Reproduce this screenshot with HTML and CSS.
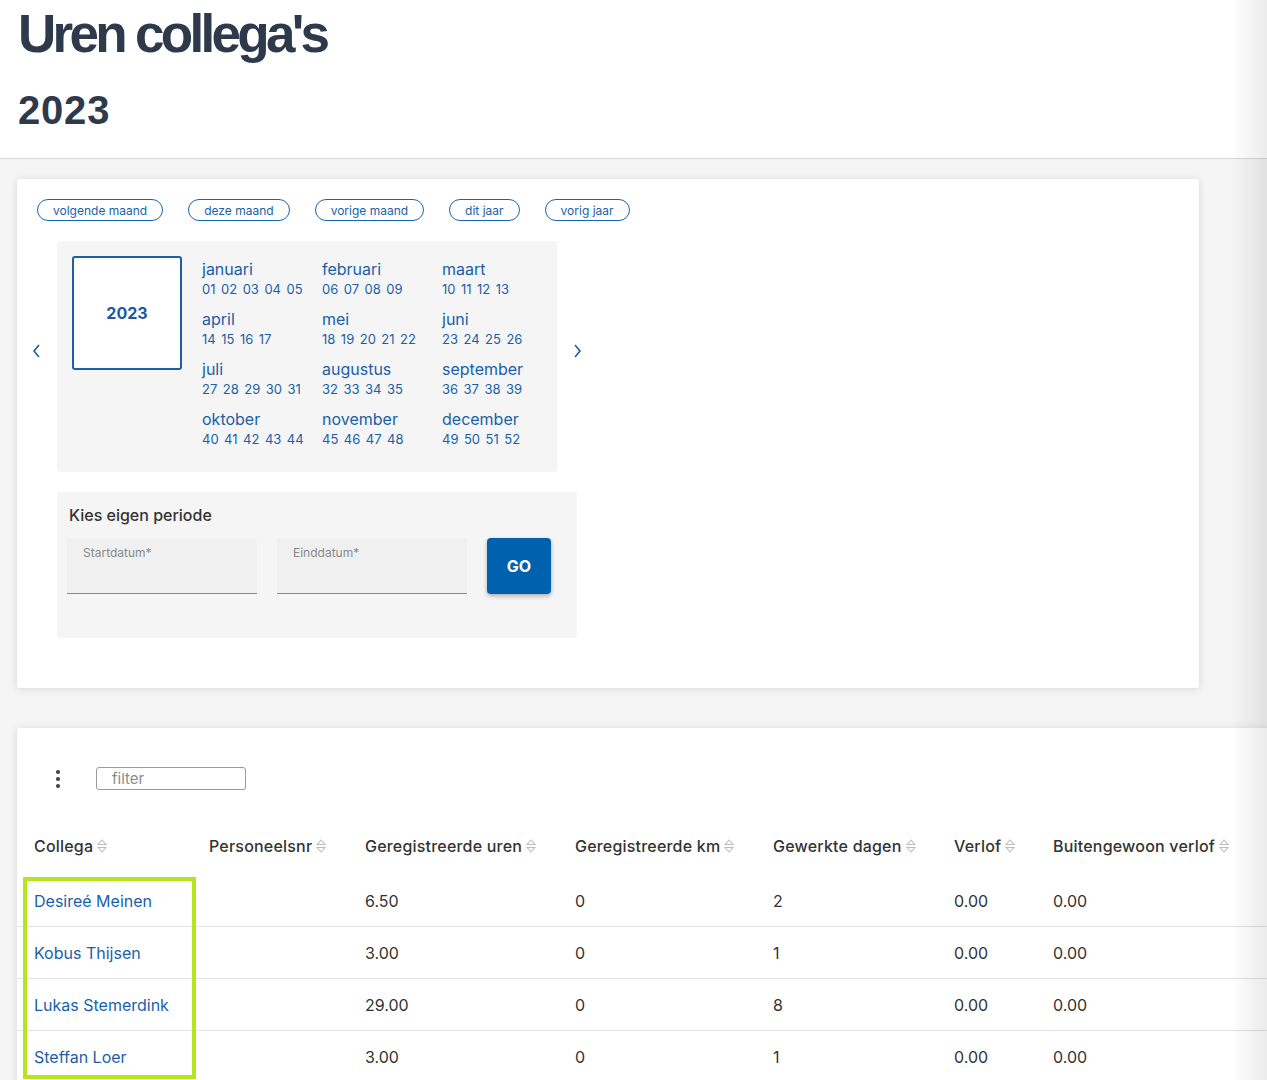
FILE: index.html
```html
<!DOCTYPE html>
<html lang="nl">
<head>
    <meta charset="UTF-8">
    <meta name="viewport" content="width=device-width, initial-scale=1.0">
    <title>Uren collega's</title>
    <link rel="stylesheet" href="styles.css">
</head>
<body>
    <header class="page-header">
        <h1>Uren collega's</h1>
        <h2>2023</h2>
    </header>

    <main class="content">
        <section class="card period-card">
            <div class="quick-links">
                <a class="pill">volgende maand</a>
                <a class="pill">deze maand</a>
                <a class="pill">vorige maand</a>
                <a class="pill">dit jaar</a>
                <a class="pill">vorig jaar</a>
            </div>

            <div class="calendar-row">
                <button class="chevron">
                    <svg width="10" height="16" viewBox="0 0 10 16"><path d="M7 2 L2 8 L7 14" fill="none" stroke="#1a5fa8" stroke-width="1.6"/></svg>
                </button>
                <div class="calendar">
                    <div class="year-box">2023</div>
                    <div class="months">
                        <div class="month"><a class="month-name">januari</a><div class="weeks"><span>01</span><span>02</span><span>03</span><span>04</span><span>05</span></div></div>
                        <div class="month"><a class="month-name">februari</a><div class="weeks"><span>06</span><span>07</span><span>08</span><span>09</span></div></div>
                        <div class="month"><a class="month-name">maart</a><div class="weeks"><span>10</span><span>11</span><span>12</span><span>13</span></div></div>
                        <div class="month"><a class="month-name">april</a><div class="weeks"><span>14</span><span>15</span><span>16</span><span>17</span></div></div>
                        <div class="month"><a class="month-name">mei</a><div class="weeks"><span>18</span><span>19</span><span>20</span><span>21</span><span>22</span></div></div>
                        <div class="month"><a class="month-name">juni</a><div class="weeks"><span>23</span><span>24</span><span>25</span><span>26</span></div></div>
                        <div class="month"><a class="month-name">juli</a><div class="weeks"><span>27</span><span>28</span><span>29</span><span>30</span><span>31</span></div></div>
                        <div class="month"><a class="month-name">augustus</a><div class="weeks"><span>32</span><span>33</span><span>34</span><span>35</span></div></div>
                        <div class="month"><a class="month-name">september</a><div class="weeks"><span>36</span><span>37</span><span>38</span><span>39</span></div></div>
                        <div class="month"><a class="month-name">oktober</a><div class="weeks"><span>40</span><span>41</span><span>42</span><span>43</span><span>44</span></div></div>
                        <div class="month"><a class="month-name">november</a><div class="weeks"><span>45</span><span>46</span><span>47</span><span>48</span></div></div>
                        <div class="month"><a class="month-name">december</a><div class="weeks"><span>49</span><span>50</span><span>51</span><span>52</span></div></div>
                    </div>
                </div>
                <button class="chevron">
                    <svg width="10" height="16" viewBox="0 0 10 16"><path d="M3 2 L8 8 L3 14" fill="none" stroke="#1a5fa8" stroke-width="1.6"/></svg>
                </button>
            </div>

            <div class="own-period">
                <h3>Kies eigen periode</h3>
                <div class="period-fields">
                    <label class="field"><span>Startdatum*</span></label>
                    <label class="field"><span>Einddatum*</span></label>
                    <button class="go-btn">GO</button>
                </div>
            </div>
        </section>

        <section class="card table-card">
            <div class="toolbar">
                <svg class="kebab" width="6" height="20" viewBox="0 0 6 20"><circle cx="3" cy="3" r="2.1" fill="#444"/><circle cx="3" cy="10" r="2.1" fill="#444"/><circle cx="3" cy="17" r="2.1" fill="#444"/></svg>
                <input class="filter" type="text" placeholder="filter">
            </div>

            <table class="hours-table">
                <colgroup>
                    <col class="c1"><col class="c2"><col class="c3"><col class="c4"><col class="c5"><col class="c6"><col class="c7">
                </colgroup>
                <thead>
                    <tr>
                        <th>Collega<svg class="sort" width="10" height="16" viewBox="0 0 10 16"><path d="M1 6.5 L5 2 L9 6.5 Z M1 9.5 L5 14 L9 9.5 Z" fill="none" stroke="#bdbdbd" stroke-width="1.1"/></svg></th>
                        <th>Personeelsnr<svg class="sort" width="10" height="16" viewBox="0 0 10 16"><path d="M1 6.5 L5 2 L9 6.5 Z M1 9.5 L5 14 L9 9.5 Z" fill="none" stroke="#bdbdbd" stroke-width="1.1"/></svg></th>
                        <th>Geregistreerde uren<svg class="sort" width="10" height="16" viewBox="0 0 10 16"><path d="M1 6.5 L5 2 L9 6.5 Z M1 9.5 L5 14 L9 9.5 Z" fill="none" stroke="#bdbdbd" stroke-width="1.1"/></svg></th>
                        <th>Geregistreerde km<svg class="sort" width="10" height="16" viewBox="0 0 10 16"><path d="M1 6.5 L5 2 L9 6.5 Z M1 9.5 L5 14 L9 9.5 Z" fill="none" stroke="#bdbdbd" stroke-width="1.1"/></svg></th>
                        <th>Gewerkte dagen<svg class="sort" width="10" height="16" viewBox="0 0 10 16"><path d="M1 6.5 L5 2 L9 6.5 Z M1 9.5 L5 14 L9 9.5 Z" fill="none" stroke="#bdbdbd" stroke-width="1.1"/></svg></th>
                        <th>Verlof<svg class="sort" width="10" height="16" viewBox="0 0 10 16"><path d="M1 6.5 L5 2 L9 6.5 Z M1 9.5 L5 14 L9 9.5 Z" fill="none" stroke="#bdbdbd" stroke-width="1.1"/></svg></th>
                        <th>Buitengewoon verlof<svg class="sort" width="10" height="16" viewBox="0 0 10 16"><path d="M1 6.5 L5 2 L9 6.5 Z M1 9.5 L5 14 L9 9.5 Z" fill="none" stroke="#bdbdbd" stroke-width="1.1"/></svg></th>
                    </tr>
                </thead>
                <tbody>
                    <tr><td><a>Desireé Meinen</a></td><td></td><td>6.50</td><td>0</td><td>2</td><td>0.00</td><td>0.00</td></tr>
                    <tr><td><a>Kobus Thijsen</a></td><td></td><td>3.00</td><td>0</td><td>1</td><td>0.00</td><td>0.00</td></tr>
                    <tr><td><a>Lukas Stemerdink</a></td><td></td><td>29.00</td><td>0</td><td>8</td><td>0.00</td><td>0.00</td></tr>
                    <tr><td><a>Steffan Loer</a></td><td></td><td>3.00</td><td>0</td><td>1</td><td>0.00</td><td>0.00</td></tr>
                </tbody>
            </table>

            <div class="highlight"></div>
        </section>
    </main>
</body>
</html>
```

FILE: styles.css
```css
html { overflow-x: hidden; }
body { margin: 0; font-family: Inter, "Noto Sans", sans-serif; color: #333; background: #f5f5f5; min-height: 1080px; }
body::after {
    content: "";
    position: fixed;
    top: 0;
    right: 0;
    bottom: 0;
    width: 36px;
    background: linear-gradient(to right, rgba(0,0,0,0), rgba(0,0,0,0.08));
    pointer-events: none;
}
a { color: #1a5fa8; text-decoration: none; cursor: pointer; }

.page-header { background: #fff; padding: 7px 18px 28px; border-bottom: 1px solid #d7d7d7; }
.page-header h1 {
    margin: 0;
    font-family: "Liberation Sans", Arial, sans-serif;
    font-size: 53px;
    line-height: 1;
    font-weight: 700;
    letter-spacing: -3.7px;
    color: #2e3a4b;
}
.page-header h2 {
    margin: 30px 0 0;
    font-family: "Liberation Sans", Arial, sans-serif;
    font-size: 40px;
    line-height: 1;
    font-weight: 700;
    letter-spacing: 0.8px;
    color: #2e3a4b;
}

.content { padding: 20px 0 0 17px; }
.card { background: #fff; border-radius: 3px; box-shadow: 0 1px 8px rgba(0,0,0,0.12); }

.period-card { width: 1182px; box-sizing: border-box; padding: 20px 20px 50px; }
.quick-links { display: flex; gap: 25px; }
.pill {
    display: inline-flex;
    align-items: center;
    height: 22px;
    box-sizing: border-box;
    padding: 0 15px;
    border: 1px solid #1665b3;
    border-radius: 11px;
    font-size: 12px;
    color: #1a5fa8;
}

.calendar-row { display: flex; align-items: center; gap: 10px; margin: 20px 0 0 -10px; }
.chevron { width: 20px; height: 24px; padding: 0; border: none; background: none; display: flex; align-items: center; justify-content: center; cursor: pointer; margin-top: -12px; }
.calendar { width: 500px; height: 231px; box-sizing: border-box; padding: 15px; background: #f5f5f5; border-radius: 3px; display: flex; gap: 20px; }
.year-box {
    flex: 0 0 110px;
    width: 110px;
    height: 114px;
    box-sizing: border-box;
    border: 2px solid #1a5fa8;
    border-radius: 3px;
    background: #fff;
    display: flex;
    align-items: center;
    justify-content: center;
    font-size: 16px;
    font-weight: 700;
    color: #1a5aa0;
}
.months { display: grid; grid-template-columns: repeat(3, 120px); row-gap: 10px; padding-top: 3px; align-content: start; }
.month-name { display: block; font-size: 16px; line-height: 20px; }
.weeks { display: flex; gap: 5.5px; font-size: 13px; line-height: 20px; color: #1a5fa8; }

.own-period { width: 520px; box-sizing: border-box; margin: 20px 0 0 20px; padding: 13px 10px 44px; background: #f5f5f5; border-radius: 3px; }
.own-period h3 { margin: 0 0 13px 2px; font-size: 16px; line-height: 20px; font-weight: 500; color: #333; }
.period-fields { display: flex; gap: 20px; }
.field {
    width: 190px;
    height: 56px;
    box-sizing: border-box;
    background: #f0f0f0;
    border-bottom: 1px solid #8c8c8c;
    padding: 7px 16px 0;
    font-size: 12px;
    color: #8a8a8a;
}
.go-btn {
    width: 64px;
    height: 56px;
    border: none;
    border-radius: 4px;
    background: #0061ae;
    color: #fff;
    font-family: Inter, sans-serif;
    font-size: 16px;
    font-weight: 700;
    box-shadow: 0 2px 4px rgba(0,0,0,0.3);
    cursor: pointer;
}

.table-card { position: relative; width: 1290px; margin-top: 40px; min-height: 360px; border-radius: 3px 0 0 0; }
.toolbar { display: flex; align-items: center; gap: 35px; padding: 39px 0 0 38px; }
.kebab { display: block; }
.filter {
    width: 150px;
    height: 23px;
    box-sizing: border-box;
    border: 1px solid #9a9a9a;
    border-radius: 3px;
    padding: 0 15px;
    font-family: Inter, sans-serif;
    font-size: 15px;
    color: #333;
}
.filter::placeholder { color: #8a8a8a; }

.hours-table { margin-top: 30px; border-collapse: collapse; table-layout: fixed; width: 1250px; }
.c1 { width: 175px; } .c2 { width: 156px; } .c3 { width: 210px; } .c4 { width: 198px; }
.c5 { width: 181px; } .c6 { width: 99px; } .c7 { width: 231px; }
.hours-table th {
    text-align: left;
    padding: 0 0 4px 17px;
    height: 51px;
    font-size: 16px;
    font-weight: 500;
    letter-spacing: 0.2px;
    color: #333;
    white-space: nowrap;
}
.sort { vertical-align: -2px; margin-left: 4px; }
.hours-table td {
    padding: 0 0 0 17px;
    height: 51px;
    border-bottom: 1px solid #e2e2e2;
    font-size: 16px;
    color: #333;
}
.hours-table td a { color: #1a5fa8; }

.highlight {
    position: absolute;
    left: 6px;
    top: 149px;
    width: 173px;
    height: 202px;
    box-sizing: border-box;
    border: 4px solid #b5e61d;
    pointer-events: none;
}
```
